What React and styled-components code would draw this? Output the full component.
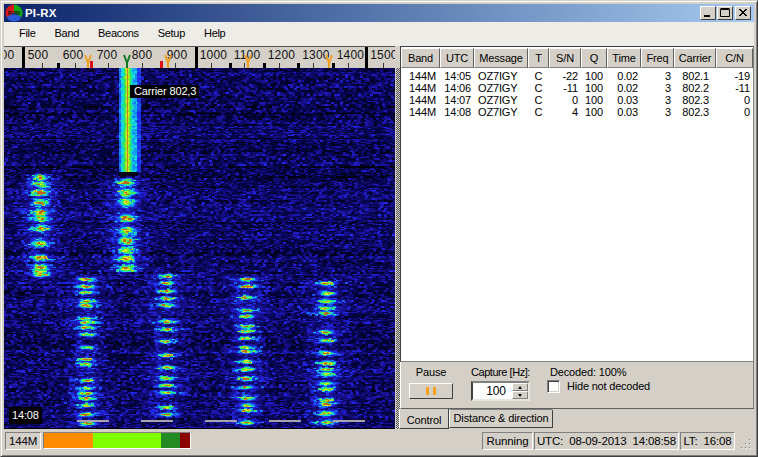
import React, { useLayoutEffect, useRef } from "react";
import styled, { createGlobalStyle } from "styled-components";

const Global = createGlobalStyle`
  html, body { margin: 0; padding: 0; background: #d4d0c8; }
  * { box-sizing: border-box; }
  body { font: 11px "Liberation Sans", Arial, sans-serif; color: #000; overflow: hidden; letter-spacing: -.15px; }
`;

const raised = `border: 1px solid; border-color: #fff #808080 #808080 #fff;`;
const sunken = `border: 1px solid; border-color: #808080 #fff #fff #808080;`;

const Window = styled.div`
  width: 758px; height: 457px; display: flex; flex-direction: column;
  padding: 4px 3px 3px 4px; background: #d4d0c8;
  border: 1px solid; border-color: #d4d0c8 #404040 #404040 #d4d0c8;
  box-shadow: inset 1px 1px 0 #fff, inset -1px -1px 0 #808080;
`;
const TitleBar = styled.div`
  height: 18px; flex: none; display: flex; align-items: center; margin-top: -1px; margin-left: -1px;
  background: linear-gradient(90deg, #0a246a, #a6caf0);
  padding: 0 3px 0 1px;
`;
const AppTitle = styled.span`
  color: #fff; font-weight: bold; font-size: 11.5px; margin-left: 2px; flex: 1; letter-spacing: .2px;
`;
const CapButton = styled.button`
  width: 16px; height: 14px; padding: 0; margin: 0 0 0 1px; background: #d4d0c8;
  border: 1px solid; border-color: #fff #404040 #404040 #fff;
  display: flex; align-items: center; justify-content: center;
  &:last-child { margin-left: 2px; }
`;
const MenuBar = styled.nav`
  height: 24px; flex: none; display: flex; align-items: center; gap: 19px; padding: 0 0 2px 15px;
  background: #eeece7; margin-left: -1px;
`;
const MenuItem = styled.span` font-size: 11px; letter-spacing: -.3px; `;
const Main = styled.div` height: 383px; flex: none; display: flex; margin-left: -1px; `;
const LeftCol = styled.div` width: 391px; flex: none; display: flex; flex-direction: column; `;
const Ruler = styled.svg` display: block; width: 391px; height: 22px; flex: none; background: #d4d0c8; `;
const Fall = styled.div` position: relative; width: 391px; height: 361px; flex: none; background: #000; `;
const FallCanvas = styled.canvas` display: block; `;
const Tip = styled.div`
  position: absolute; background: #000; color: #fff; font-size: 11px; line-height: 13px;
  left: ${p => p.$x}px; top: ${p => p.$y}px; padding: ${p => p.$pad};
`;
const Splitter = styled.div`
  width: 4px; flex: none; margin-left: 1px; height: 361px; margin-top: 22px;
  background-image: repeating-conic-gradient(#555 0 25%, #d4d0c8 0 50%);
  background-size: 2px 2px;
`;
const RightCol = styled.div` flex: 1; display: flex; flex-direction: column; min-width: 0; `;
const List = styled.div`
  height: 316px; flex: none; background: #fff; border: 1px solid #404040; border-right-color: #808080;
  border-bottom-color: #808080; padding-top: 1px;
`;
const cols = "39px 34px 54px 21px 32px 26px 34px 33px 42px 37px";
const HeadRow = styled.div` display: grid; grid-template-columns: ${cols}; height: 20px; `;
const HeadCell = styled.div`
  ${raised}; background: #d4d0c8; display: flex; align-items: center; justify-content: center;
  font-size: 11px; border-right-color: #606060; border-bottom-color: #808080;
`;
const Rows = styled.div` padding-top: 2px; `;
const Row = styled.div` display: grid; grid-template-columns: ${cols}; height: 12px; line-height: 12px; `;
const Cell = styled.div`
  text-align: ${p => p.$a || "right"}; font-size: 11px; white-space: nowrap;
  padding: ${p => p.$pad || "0 3px 0 0"};
`;
const Pane = styled.div`
  height: 47px; flex: none; position: relative; display: flex; background: #d4d0c8;
  border-right: 1px solid #808080; border-bottom: 1px solid #606060; border-left: 1px solid #fff;
  padding: 4px 0 0 8px;
`;
const Group = styled.div`
  display: flex; flex-direction: column; align-items: ${p => p.$align || "center"};
  width: ${p => p.$w}px; margin-right: ${p => p.$mr || 0}px; gap: ${p => p.$gap ?? 3}px;
`;
const Lbl = styled.div` font-size: 11px; line-height: 13px; white-space: nowrap; letter-spacing: ${p => p.$ls ?? -0.15}px; `;
const PauseBtn = styled.button`
  width: 44px; height: 16px; padding: 0; margin-top: 1px; background: #d4d0c8; display: flex; align-items: center; justify-content: center; gap: 4px;
  border: 1px solid; border-color: #fff #404040 #404040 #fff;
`;
const PauseBar = styled.i` display: block; width: 3px; height: 8px; background: #f5a31e; `;
const Spin = styled.div`
  width: 59px; height: 20px; background: #fff; display: flex; margin-top: -1px;
  border: 2px solid; border-color: #808080 #e8e6e0 #e8e6e0 #404040;
`;
const SpinVal = styled.div` flex: 1; text-align: center; font-size: 12px; line-height: 16px; padding-left: 7px; `;
const SpinBtns = styled.div` width: 16px; display: flex; flex-direction: column; background: #d4d0c8; `;
const SpinBtn = styled.div`
  flex: 1; ${raised}; display: flex; align-items: center; justify-content: center;
  &::after { content: ""; border-left: 2.5px solid transparent; border-right: 2.5px solid transparent;
    ${p => p.$up ? "border-bottom: 3px solid #000;" : "border-top: 3px solid #000;"} }
`;
const CheckRow = styled.label` display: flex; align-items: center; gap: 7px; margin-top: -2px; margin-left: -3px; `;
const Check = styled.span`
  width: 13px; height: 13px; background: #fff; display: block;
  border: 1px solid; border-color: #808080 #fff #fff #808080; box-shadow: inset 1px 1px 0 #404040, inset -1px -1px 0 #d4d0c8;
`;
const Tabs = styled.div` height: 20px; flex: none; display: flex; align-items: flex-start; padding-left: 0; `;
const Tab = styled.div`
  font-size: 11px; display: flex; align-items: center; justify-content: center;
  width: ${p => p.$w}px; height: ${p => p.$active ? 20 : 19}px; background: #d4d0c8;
  border: 1px solid; border-top: ${p => p.$active ? "0" : "1px solid #fff"};
  border-color: ${p => p.$active ? "#d4d0c8 #404040 #404040 #fff" : "#fff #404040 #404040 #fff"};
  ${p => p.$active ? "padding-top: 3px; margin-left: -1px;" : "padding-bottom: 2px; margin-top: 0; border-top-color: #808080; border-radius: 2px 2px 0 0;"}
`;
const StatusBar = styled.div`
  height: 23px; flex: none; display: flex; align-items: flex-start; padding: 3px 2px 0 1px; margin-left: -1px;
`;
const StatusPanel = styled.div`
  ${sunken}; height: 18px; width: ${p => p.$w}px; margin-right: ${p => p.$mr ?? 1}px; flex: none;
  display: flex; align-items: center; justify-content: center; font-size: 11.5px; white-space: nowrap;
  word-spacing: ${p => p.$ws || 0}px;
`;
const Meter = styled.div`
  width: 148px; height: 17px; margin-left: 2px; display: flex; flex: none; border: 1px solid; border-color: #808080 #fff #fff #808080;
`;
const MeterSeg = styled.div` width: ${p => p.$w}px; background: ${p => p.$c}; `;
const Fill = styled.div` flex: 1; `;
const Grip = styled.svg` width: 15px; height: 15px; flex: none; margin: 3px 0 0 2px; `;

function mulberry(a) {
  return () => {
    a |= 0; a = (a + 0x6d2b79f5) | 0;
    let t = Math.imul(a ^ (a >>> 15), 1 | a);
    t = (t + Math.imul(t ^ (t >>> 7), 61 | t)) ^ t;
    return ((t ^ (t >>> 14)) >>> 0) / 4294967296;
  };
}
const stops = [
  [0, [0, 0, 0]], [0.14, [4, 4, 70]], [0.3, [28, 18, 160]], [0.42, [34, 40, 235]],
  [0.55, [20, 130, 245]], [0.64, [20, 225, 225]], [0.74, [40, 225, 90]], [0.84, [140, 240, 30]],
  [0.92, [240, 235, 40]], [1, [190, 100, 30]],
];
function cmap(v) {
  v = Math.max(0, Math.min(1, v));
  for (let i = 1; i < stops.length; i++) {
    if (v <= stops[i][0]) {
      const [a, ca] = stops[i - 1], [b, cb] = stops[i];
      const t = (v - a) / (b - a);
      return ca.map((c, k) => c + (cb[k] - c) * t);
    }
  }
  return stops[stops.length - 1][1];
}
const SIGNALS = [
  { x: 36, w: 7, amp: 0.54, h: 3.4, b: [109,116,124,134,144,150,160,175,189,199,205] },
  { x: 122, w: 7.5, amp: 0.54, h: 4.2, b: [114,124,134,150,162,172,182,190,200] },
  { x: 82, w: 7, amp: 0.52, h: 2, b: [211,218,224,233,237,250,254,259,266,279,291,296,312,320,325,330,337,346,355] },
  { x: 162, w: 7, amp: 0.52, h: 2, b: [208,215,223,230,237,253,261,273,287,299,310,317,324,339,346] },
  { x: 242, w: 7, amp: 0.52, h: 2, b: [211,218,229,242,248,258,263,270,279,283,293,301,310,319,330,337,342,354] },
  { x: 322, w: 7, amp: 0.52, h: 2.1, b: [215,225,233,240,245,264,272,285,295,301,306,315,321,332,336,345,354] },
];
function Waterfall() {
  const ref = useRef(null);
  useLayoutEffect(() => {
    const W = 391, H = 361, ctx = ref.current.getContext("2d");
    const img = ctx.createImageData(W, H), r = mulberry(7);
    const rowGain = [];
    let g = 0;
    for (let y = 0; y < H; y++) { if (y % 2 === 0) g = (r() - 0.5) * 0.09; rowGain[y] = g; }
    [[38, 2], [98, 2], [108, 2], [45, 1], [70, 1]].forEach(([y, h]) => { for (let i = 0; i < h; i++) rowGain[y + i] -= 0.12; });
    const cw = 3;
    const noiseCols = Math.ceil(W / cw) + 2;
    const rnd = [];
    for (let y = 0; y < H; y++) {
      if (y % 2 === 1 && r() < 0.55) { rnd[y] = rnd[y - 1]; continue; }
      const off = r() * cw;
      const a = [];
      for (let i = 0; i < noiseCols; i++) { const n = r(); a.push(n * n * 0.26 + r() * 0.09); }
      rnd[y] = { a, off };
    }
    for (let y = 0; y < H; y++) {
      const { a, off } = rnd[y];
      const amp = [];
      for (let s = 0; s < SIGNALS.length; s++) {
        const S = SIGNALS[s]; let m = 0;
        for (const b of S.b) { const d = (y - b) / S.h; m = Math.max(m, Math.exp(-d * d)); }
        amp[s] = m;
      }
      for (let x = 0; x < W; x++) {
        const qx = Math.floor((x + off) / cw);
        let v = 0.06 + a[qx] + rowGain[y];
        for (let s = 0; s < SIGNALS.length; s++) {
          const S = SIGNALS[s], m = amp[s];
          const dx = x - S.x;
          if (Math.abs(dx) > 36) continue;
          const lobe = 0.24 * Math.exp(-(dx * dx) / (15 * 15)) * (0.5 + a[qx] * 2.4);
          const inSig = y > S.b[0] - 4 && y < S.b[S.b.length - 1] + 4;
          const glow = inSig ? 0.08 * Math.exp(-(dx * dx) / (17 * 17)) : 0;
          v += m * (S.amp * Math.exp(-(dx * dx) / (S.w * S.w)) + lobe) + glow;
        }
        if (y < 104) {
          const dx = x - 123;
          if (dx > -9 && dx < 14) {
            const edge = dx < -6 ? 0.52 : dx > 9 ? 0.44 : dx > 4 ? 0.58 : 0.62;
            v = edge + 0.28 * Math.exp(-(dx * dx) / (3 * 3)) + (a[qx] - 0.11) * 0.4;
            if (Math.abs(dx) < 1) v = 0.98;
          }
        }
        if (y >= 104 && y < 108 && x > 113 && x < 134) v *= 0.3;
        const [R, G, B] = cmap(v);
        const i = (y * W + x) * 4;
        img.data[i] = R; img.data[i + 1] = G; img.data[i + 2] = B; img.data[i + 3] = 255;
      }
    }
    ctx.putImageData(img, 0, 0);
    ctx.fillStyle = "#a6a2b0";
    [73, 137, 201, 265, 329].forEach(x => ctx.fillRect(x, 352, 32, 2));
    ctx.fillStyle = "#000";
    ctx.fillRect(0, 360, W, 1);
  }, []);
  return <FallCanvas ref={ref} width={391} height={361} />;
}

const fullTicks = [18, 191, 361];
const shortThick = [53, 225, 259, 293, 328];
const thin = [38, 71, 104, 138, 171, 207, 240, 275, 309, 344, 379];
const labels = [[0, "400"], [34, "500"], [69, "600"], [103, "700"], [138, "800"], [173, "900"], [209.5, "1000"], [243, "1100"], [277.5, "1200"], [312, "1300"], [346.5, "1400"], [380, "1500"]];
const forks = [[84, "#f0a020"], [123, "#0f7a20"], [164, "#f0a020"], [244, "#f0a020"], [325, "#f0a020"]];

function RulerDraw() {
  return (
    <Ruler viewBox="0 0 391 22">
      <rect x="0" y="0" width="391" height="1" fill="#555" />
      {labels.map(([x, t]) => (
        <text key={t} x={x} y={13} textAnchor="middle" fontFamily="'Liberation Sans', Arial, sans-serif" fontSize="12" letterSpacing=".2" fill="#111">{t}</text>
      ))}
      {fullTicks.map(x => <rect key={x} x={x} y="1" width="3" height="21" fill="#000" />)}
      {shortThick.map(x => <rect key={x} x={x} y="17" width="3" height="5" fill="#000" />)}
      {thin.map(x => <rect key={x} x={x} y="17" width="1" height="5" fill="#333" />)}
      <rect x="86" y="15" width="3" height="7" fill="#e01010" />
      <rect x="156" y="15" width="3" height="7" fill="#e01010" />
      {forks.map(([x, c]) => (
        <path key={x} d={`M${x - 3} 9 L${x} 17 L${x} 22 M${x + 3} 9 L${x} 17`} stroke={c} strokeWidth="2" fill="none" />
      ))}
    </Ruler>
  );
}

const data = [
  ["144M", "14:05", "OZ7IGY", "C", "-22", "100", "0.02", "3", "802.1", "-19"],
  ["144M", "14:06", "OZ7IGY", "C", "-11", "100", "0.02", "3", "802.2", "-11"],
  ["144M", "14:07", "OZ7IGY", "C", "0", "100", "0.03", "3", "802.3", "0"],
  ["144M", "14:08", "OZ7IGY", "C", "4", "100", "0.03", "3", "802.3", "0"],
];
const heads = ["Band", "UTC", "Message", "T", "S/N", "Q", "Time", "Freq", "Carrier", "C/N"];

function AppIcon() {
  return (
    <svg width="18" height="18" viewBox="0 0 18 18" style={{ flex: "none" }}>
      <path d="M9 9 L9 0.5 A8.5 8.5 0 0 0 1.6 13.2 Z" fill="#d81818" />
      <path d="M9 9 L9 0.5 A8.5 8.5 0 0 1 16.4 13.2 Z" fill="#12a812" />
      <path d="M9 9 L1.6 13.2 A8.5 8.5 0 0 0 16.4 13.2 Z" fill="#2a58d8" />
      <text x="9" y="10.5" textAnchor="middle" fontSize="5" fontWeight="bold" fontFamily="'Liberation Sans', sans-serif" fill="#111">PI-RX</text>
    </svg>
  );
}

export default function App() {
  return (
    <>
      <Global />
      <Window>
        <TitleBar>
          <AppIcon />
          <AppTitle>PI-RX</AppTitle>
          <CapButton aria-label="Minimize">
            <svg width="10" height="10"><rect x="1" y="7" width="6" height="2" fill="#000" /></svg>
          </CapButton>
          <CapButton aria-label="Maximize">
            <svg width="10" height="10"><path d="M0.5 1.5 H9.5 V8.5 H0.5 Z M0.5 0.5 H9.5" stroke="#000" fill="none" /></svg>
          </CapButton>
          <CapButton aria-label="Close">
            <svg width="10" height="10"><path d="M1 1 L8 8 M2 1 L9 8 M8 1 L1 8 M9 1 L2 8" stroke="#000" /></svg>
          </CapButton>
        </TitleBar>
        <MenuBar>
          {["File", "Band", "Beacons", "Setup", "Help"].map(m => <MenuItem key={m}>{m}</MenuItem>)}
        </MenuBar>
        <Main>
          <LeftCol>
            <RulerDraw />
            <Fall>
              <Waterfall />
              <Tip $x={126} $y={17} $pad="0 3px 0 4px">Carrier 802,3</Tip>
              <Tip $x={5} $y={339} $pad="2px 3px">14:08</Tip>
            </Fall>
          </LeftCol>
          <Splitter />
          <RightCol>
            <List>
              <HeadRow>{heads.map(h => <HeadCell key={h}>{h}</HeadCell>)}</HeadRow>
              <Rows>
                {data.map(r => (
                  <Row key={r[1]}>
                    <Cell $pad="0 4px 0 0">{r[0]}</Cell>
                    <Cell>{r[1]}</Cell>
                    <Cell $a="left" $pad="0 0 0 4px">{r[2]}</Cell>
                    <Cell $a="center" $pad="0">{r[3]}</Cell>
                    <Cell>{r[4]}</Cell>
                    <Cell $pad="0 4px 0 0">{r[5]}</Cell>
                    <Cell>{r[6]}</Cell>
                    <Cell>{r[7]}</Cell>
                    <Cell $pad="0 7px 0 0">{r[8]}</Cell>
                    <Cell>{r[9]}</Cell>
                  </Row>
                ))}
              </Rows>
            </List>
            <Pane>
              <Group $w={44} $mr={18}>
                <Lbl>Pause</Lbl>
                <PauseBtn aria-label="Pause"><PauseBar /><PauseBar /></PauseBtn>
              </Group>
              <Group $w={59} $mr={20} $align="flex-start">
                <Lbl $ls={-0.45}>Capture [Hz]:</Lbl>
                <Spin>
                  <SpinVal>100</SpinVal>
                  <SpinBtns><SpinBtn $up /><SpinBtn /></SpinBtns>
                </Spin>
              </Group>
              <Group $w={120} $align="flex-start">
                <Lbl>Decoded: 100%</Lbl>
                <CheckRow><Check /><Lbl $ls={-0.2}>Hide not decoded</Lbl></CheckRow>
              </Group>
            </Pane>
            <Tabs>
              <Tab $active $w={50}>Control</Tab>
              <Tab $w={104}>Distance &amp; direction</Tab>
            </Tabs>
          </RightCol>
        </Main>
        <StatusBar>
          <StatusPanel $w={36} $mr={0}>144M</StatusPanel>
          <Meter>
            <MeterSeg $w={49} $c="#ff8c00" />
            <MeterSeg $w={68} $c="#7fff00" />
            <MeterSeg $w={19} $c="#228b22" />
            <MeterSeg $w={10} $c="#8b0000" />
          </Meter>
          <Fill />
          <StatusPanel $w={51}>Running</StatusPanel>
          <StatusPanel $w={145} $ws={3}>UTC: 08-09-2013 14:08:58</StatusPanel>
          <StatusPanel $w={55} $ws={3} $mr={0}>LT: 16:08</StatusPanel>
          <Grip viewBox="0 0 15 15">
            {[[12, 4], [8, 8], [12, 8], [4, 12], [8, 12], [12, 12]].map(([x, y]) => (
              <g key={`${x}-${y}`}><rect x={x} y={y} width="1" height="1" fill="#808080" /><rect x={x + 1} y={y + 1} width="1" height="1" fill="#fff" /></g>
            ))}
          </Grip>
        </StatusBar>
      </Window>
    </>
  );
}
